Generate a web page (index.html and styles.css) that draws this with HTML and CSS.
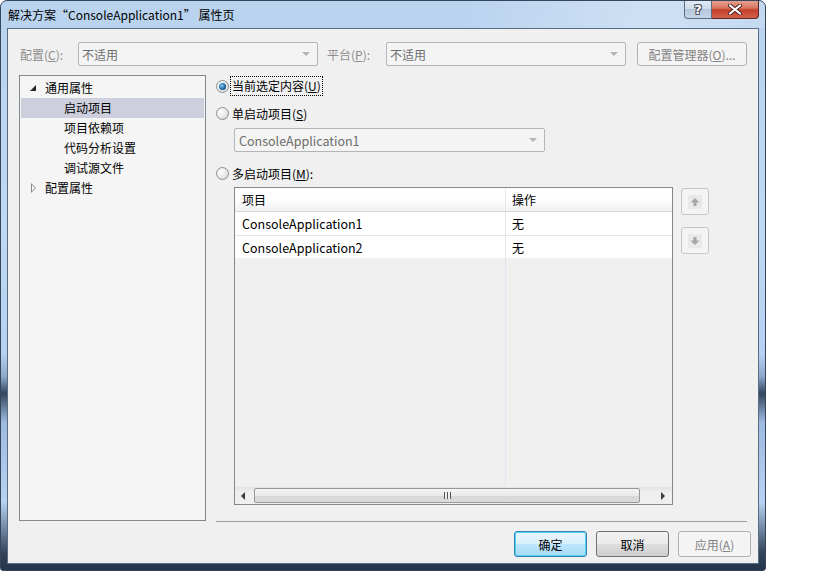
FILE: index.html
```html
<!DOCTYPE html>
<html lang="zh-CN">
<head>
  <meta charset="UTF-8" />
  <title>解决方案“ConsoleApplication1” 属性页</title>
  <link rel="stylesheet" href="styles.css">
</head>
<body>
  <div class="window">
    <div class="titlebar">
      <span class="title">解决方案“ConsoleApplication1” 属性页</span>
      <div class="caption">
        <div class="cap help">?</div>
        <div class="cap close">
          <svg width="14" height="11" viewBox="0 0 14 11">
            <path d="M2 1.5 L12 9.5 M12 1.5 L2 9.5" stroke="#4a2222" stroke-width="4" stroke-linecap="round"/>
            <path d="M2 1.5 L12 9.5 M12 1.5 L2 9.5" stroke="#fff" stroke-width="2.2" stroke-linecap="round"/>
          </svg>
        </div>
      </div>
    </div>

    <div class="content">
      <div class="toolbar">
        <span class="tlabel">配置(<u>C</u>):</span>
        <div class="combo wide">不适用<span class="arrow"></span></div>
        <span class="tlabel second">平台(<u>P</u>):</span>
        <div class="combo wide">不适用<span class="arrow"></span></div>
        <div class="btn disabled manager">配置管理器(<u>O</u>)...</div>
      </div>

      <div class="main">
        <div class="tree">
          <div class="node"><span class="exp open"></span>通用属性</div>
          <div class="node child selected">启动项目</div>
          <div class="node child">项目依赖项</div>
          <div class="node child">代码分析设置</div>
          <div class="node child">调试源文件</div>
          <div class="node"><span class="exp closed"></span>配置属性</div>
        </div>

        <div class="pane">
          <div class="opt first">
            <span class="radio checked"><span class="dot"></span></span>
            <span class="focus">当前选定内容(<u>U</u>)</span>
          </div>
          <div class="opt second">
            <span class="radio"></span>
            <span class="olabel">单启动项目(<u>S</u>)</span>
          </div>
          <div class="combo single">ConsoleApplication1<span class="arrow"></span></div>
          <div class="opt third">
            <span class="radio"></span>
            <span class="olabel">多启动项目(<u>M</u>):</span>
          </div>

          <div class="grid-wrap">
            <div class="grid">
              <div class="ghead">
                <div class="c1">项目</div>
                <div class="c2">操作</div>
              </div>
              <div class="grow">
                <div class="c1">ConsoleApplication1</div>
                <div class="c2">无</div>
              </div>
              <div class="grow last">
                <div class="c1">ConsoleApplication2</div>
                <div class="c2">无</div>
              </div>
              <div class="gfill"><div class="c1"></div></div>
              <div class="hscroll">
                <span class="sarrow left"></span>
                <div class="thumb"><span class="grip"></span></div>
                <span class="sarrow right"></span>
              </div>
            </div>
            <div class="movers">
              <div class="mover">
                <svg width="10" height="10" viewBox="0 0 10 10"><polygon points="5,1 9.5,5.5 6.5,5.5 6.5,9 3.5,9 3.5,5.5 0.5,5.5" fill="#a6a6a6"/></svg>
              </div>
              <div class="mover down">
                <svg width="10" height="10" viewBox="0 0 10 10"><polygon points="5,9 9.5,4.5 6.5,4.5 6.5,1 3.5,1 3.5,4.5 0.5,4.5" fill="#a6a6a6"/></svg>
              </div>
            </div>
          </div>
        </div>
      </div>

      <div class="footer">
        <div class="btn default">确定</div>
        <div class="btn">取消</div>
        <div class="btn disabled">应用(<u>A</u>)</div>
      </div>
    </div>
  </div>
</body>
</html>
```

FILE: styles.css
```css
body {
  margin: 0;
  background: #fff;
  font-family: "Noto Sans CJK SC", "Noto Sans", sans-serif;
  font-size: 12px;
  color: #000;
}
.window {
  width: 766px;
  height: 571px;
  box-sizing: border-box;
  border: 1px solid #34455c;
  border-radius: 7px 7px 3px 3px;
  background: linear-gradient(to bottom, #b9d3ef 0%, #bfd8f3 40%, #b5d2f1 62%, #8ba8c9 66%, #34465e 69%, #9dbbe0 74%, #b7d3f2 88%, #33445b 97%, #26354a 100%);
  display: flex;
  flex-direction: column;
  overflow: hidden;
}
.titlebar {
  height: 27px;
  display: flex;
  align-items: flex-start;
  background: linear-gradient(to right, rgba(255,255,255,0) 60%, rgba(255,255,255,0.3) 85%, rgba(255,255,255,0.15));
}
.title {
  margin: 5px 0 0 7px;
  line-height: 17px;
}
.caption {
  margin-left: auto;
  margin-right: 6px;
  margin-top: -1px;
  display: flex;
}
.cap {
  height: 19px;
  box-sizing: border-box;
  display: flex;
  align-items: center;
  justify-content: center;
}
.help {
  width: 28px;
  border: 1px solid #5c6d83;
  border-top: none;
  border-radius: 0 0 0 4px;
  background: linear-gradient(to bottom, #e4ecf6 0%, #cfdbe9 48%, #b5c7dc 52%, #c6d6e8 100%);
  color: #fff;
  font-family: "DejaVu Sans", sans-serif;
  font-weight: bold;
  font-size: 13px;
  text-shadow: 0 0 1px #334, 1px 1px 0 #556, -1px -1px 0 #556, 1px -1px 0 #556, -1px 1px 0 #556;
}
.close {
  width: 47px;
  border: 1px solid #5b2a24;
  border-top: none;
  border-left: none;
  border-radius: 0 0 4px 0;
  background: linear-gradient(to bottom, #e8a795 0%, #d8755f 45%, #c4412b 55%, #d4604a 100%);
}
.content {
  flex: 1;
  margin: 0 6px 6px 6px;
  border: 1px solid #5b6c82;
  background: #f0f0f0;
  display: flex;
  flex-direction: column;
}
.toolbar {
  display: flex;
  align-items: center;
  height: 24px;
  padding: 13px 0 0 12px;
}
.tlabel {
  width: 58px;
  color: #8d8d8d;
}
.tlabel.second {
  width: 59px;
  margin-left: 9px;
}
.combo {
  box-sizing: border-box;
  height: 24px;
  border: 1px solid #b3b6b9;
  border-radius: 2px;
  background: #f4f4f4;
  color: #6d6d6d;
  display: flex;
  align-items: center;
  padding-left: 3px;
  position: relative;
}
.combo.wide {
  width: 240px;
}
.arrow {
  position: absolute;
  right: 7px;
  top: 9px;
  border-left: 4px solid transparent;
  border-right: 4px solid transparent;
  border-top: 4px solid #b4b4b4;
}
.btn {
  box-sizing: border-box;
  width: 73px;
  height: 26px;
  border: 1px solid #707070;
  border-radius: 3px;
  background: linear-gradient(to bottom, #f2f2f2 0%, #ebebeb 48%, #dddddd 52%, #cfcfcf 100%);
  display: flex;
  align-items: center;
  justify-content: center;
}
.btn.disabled {
  border-color: #adb2b5;
  background: #f4f4f4;
  color: #838383;
}
.btn.default {
  border-color: #3c7fb1;
  background: linear-gradient(to bottom, #eaf6fd 0%, #d9f0fc 48%, #bee6fd 52%, #a7d9f5 100%);
  box-shadow: inset 0 0 0 1px #48d5f8;
}
.btn.manager {
  width: 110px;
  height: 24px;
  margin-left: 11px;
}
.main {
  display: flex;
  margin-top: 9px;
  padding-left: 11px;
}
.tree {
  box-sizing: border-box;
  width: 187px;
  height: 446px;
  border: 1px solid #828790;
  background: #f5f5f5;
  padding: 2px 1px;
}
.node {
  box-sizing: border-box;
  height: 20px;
  display: flex;
  align-items: center;
  padding-left: 24px;
  padding-bottom: 2px;
}
.node.child {
  padding-left: 43px;
}
.node.selected {
  background: #cdd0dc;
}
.exp {
  width: 15px;
  height: 11px;
  margin-left: -15px;
  position: relative;
}
.exp.open::before {
  content: "";
  position: absolute;
  left: 0;
  top: 3px;
  border-left: 6px solid transparent;
  border-bottom: 6px solid #262626;
}
.exp.closed::before {
  content: "";
  position: absolute;
  left: 1px;
  top: 1px;
  width: 0;
  height: 0;
  border-top: 5px solid transparent;
  border-bottom: 5px solid transparent;
  border-left: 5px solid #8a8a8a;
}
.exp.closed::after {
  content: "";
  position: absolute;
  left: 2px;
  top: 3px;
  border-top: 3px solid transparent;
  border-bottom: 3px solid transparent;
  border-left: 3px solid #f5f5f5;
}
.pane {
  box-sizing: border-box;
  width: 531px;
  height: 447px;
  margin-left: 10px;
  border-bottom: 1px solid #a0a0a0;
  display: flex;
  flex-direction: column;
}
.opt {
  height: 22px;
  display: flex;
  align-items: center;
}
.opt.second {
  margin-top: 5px;
}
.opt.third {
  margin-top: 10px;
}
.radio {
  box-sizing: border-box;
  width: 13px;
  height: 13px;
  border-radius: 50%;
  border: 1px solid #8e8f8f;
  background: radial-gradient(circle at 35% 35%, #ffffff 0%, #e6e6e6 55%, #cfcfcf 100%);
  display: flex;
  align-items: center;
  justify-content: center;
}
.dot {
  width: 7px;
  height: 7px;
  border-radius: 50%;
  background: radial-gradient(circle at 40% 40%, #8fd6f7 0%, #2a77b3 45%, #0c2f57 100%);
}
.focus {
  margin-left: 2px;
  padding: 0 1px;
  line-height: 18px;
  outline: 1px dotted #000;
}
.olabel {
  margin-left: 3px;
}
.combo.single {
  width: 311px;
  margin: 4px 0 0 18px;
  padding-left: 4px;
  font-size: 12.5px;
}
.grid-wrap {
  display: flex;
  margin: 3px 0 0 18px;
}
.grid {
  box-sizing: border-box;
  width: 439px;
  height: 318px;
  border: 1px solid #828790;
  background: #f0f0f0;
  display: flex;
  flex-direction: column;
}
.ghead, .grow {
  display: flex;
  height: 23px;
  border-bottom: 1px solid #e5e5e5;
  background: #fff;
}
.ghead {
  border-bottom-color: #d5d5d5;
  background: linear-gradient(to bottom, #ffffff 0%, #ffffff 40%, #f1f2f4 100%);
}
.grow.last {
  height: 22px;
  border-bottom: none;
}
.c1 {
  width: 263px;
  padding-left: 7px;
  border-right: 1px solid #e6e6e6;
  display: flex;
  align-items: center;
}
.c2 {
  flex: 1;
  padding-left: 6px;
  display: flex;
  align-items: center;
}
.grow .c1 {
  font-size: 12.5px;
}
.gfill {
  flex: 1;
  display: flex;
}
.gfill .c1 {
  border-right-color: #dde6f1;
}
.hscroll {
  height: 17px;
  display: flex;
  align-items: center;
  background: linear-gradient(to bottom, #e3e3e3 0%, #efefef 30%, #efefef 100%);
  position: relative;
}
.sarrow {
  width: 19px;
  height: 17px;
  position: relative;
}
.sarrow.left::before {
  content: "";
  position: absolute;
  left: 6px;
  top: 5px;
  border-top: 4px solid transparent;
  border-bottom: 4px solid transparent;
  border-right: 4px solid #3a3a3a;
}
.sarrow.right {
  margin-left: auto;
}
.sarrow.right::before {
  content: "";
  position: absolute;
  left: 8px;
  top: 5px;
  border-top: 4px solid transparent;
  border-bottom: 4px solid transparent;
  border-left: 4px solid #3a3a3a;
}
.thumb {
  box-sizing: border-box;
  width: 386px;
  height: 15px;
  border: 1px solid #979797;
  border-radius: 2px;
  background: linear-gradient(to bottom, #f5f5f5 0%, #e8e8e8 50%, #d6d6d6 52%, #dcdcdc 100%);
  display: flex;
  align-items: center;
  justify-content: center;
}
.grip {
  width: 7px;
  height: 7px;
  background: repeating-linear-gradient(to right, #555 0, #555 1px, #eee 1px, #eee 3px);
}
.movers {
  display: flex;
  flex-direction: column;
  margin-left: 8px;
  padding-top: 1px;
}
.mover {
  box-sizing: border-box;
  width: 28px;
  height: 27px;
  border: 1px solid #c6c6c6;
  border-radius: 3px;
  background: #f4f4f4;
  display: flex;
  align-items: center;
  justify-content: center;
}
.mover svg {
  background: #e9e9e9;
  padding: 2px;
}
.mover.down {
  margin-top: 12px;
}
.footer {
  display: flex;
  justify-content: flex-end;
  gap: 9px;
  margin-top: 9px;
  padding-right: 7px;
}
```
